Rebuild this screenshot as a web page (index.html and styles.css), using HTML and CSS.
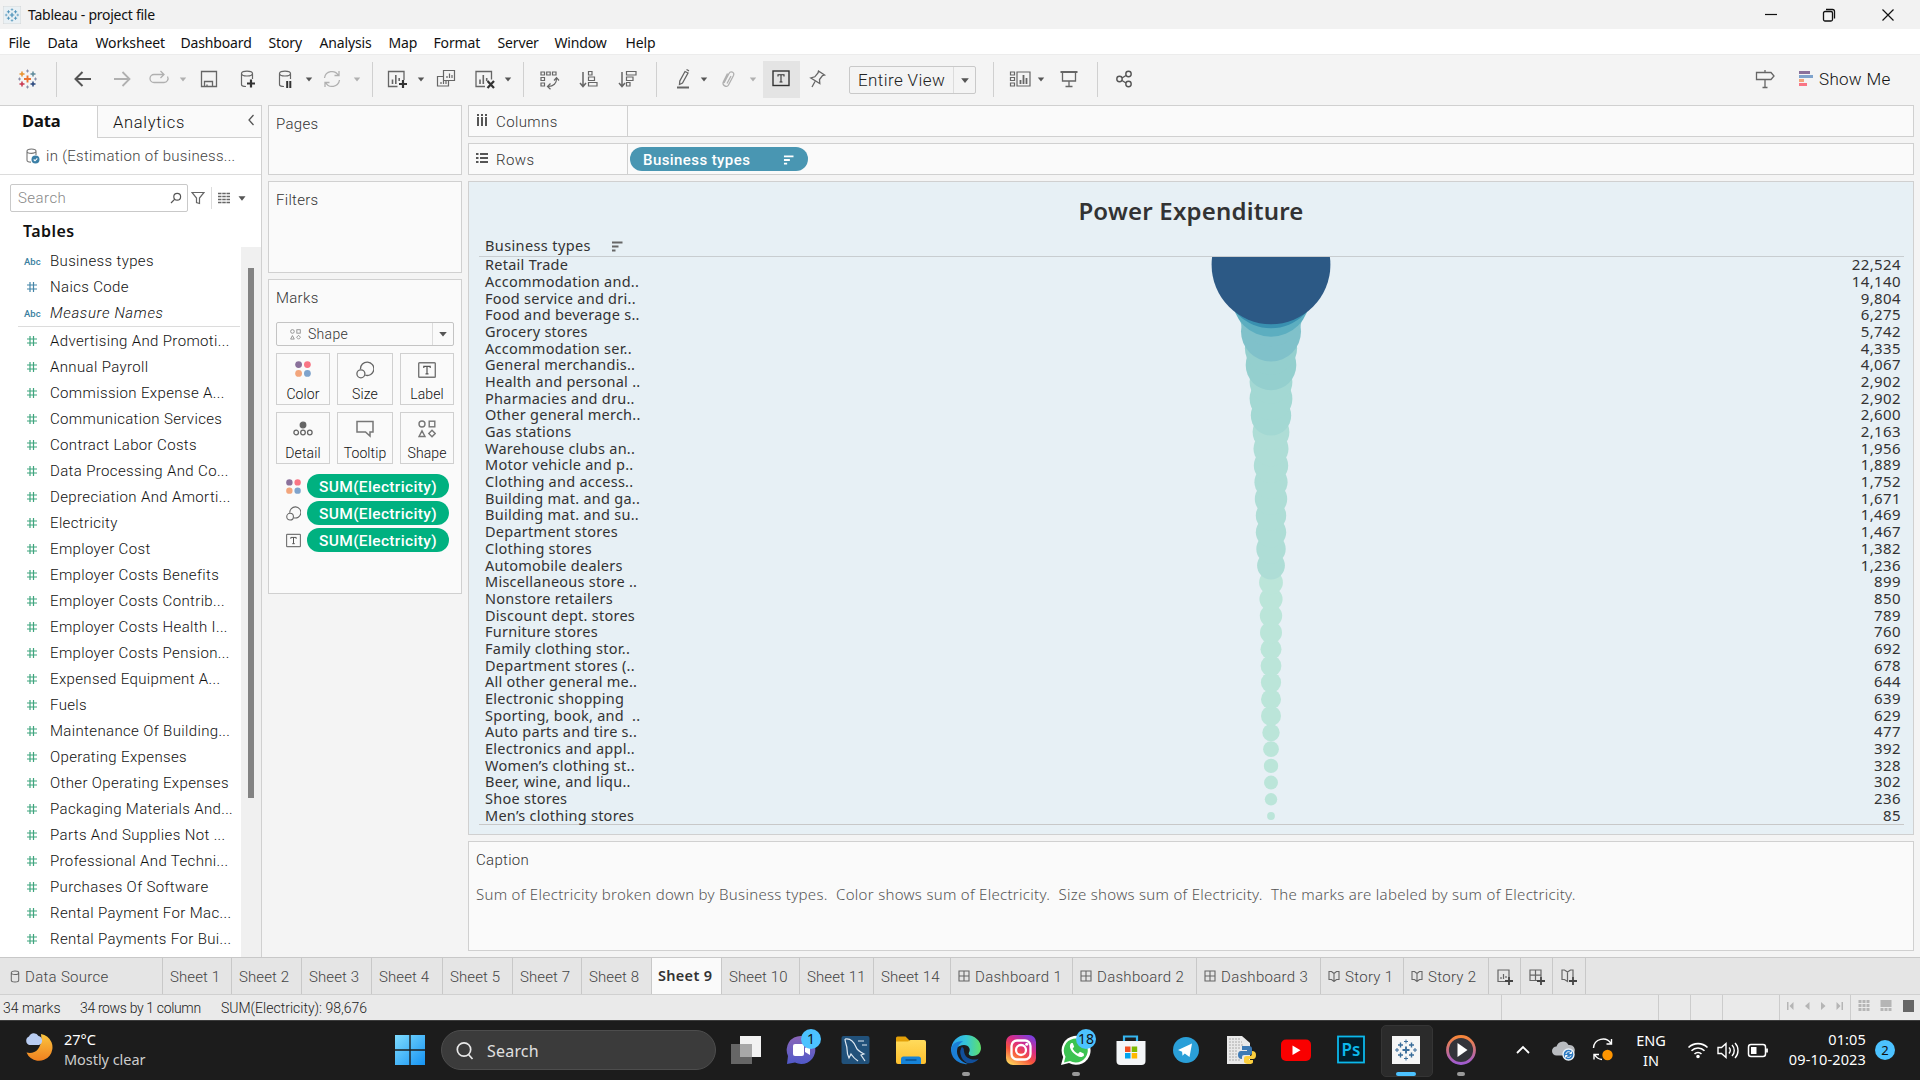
FILE: index.html
```html
<!DOCTYPE html>
<html lang="en">
<head>
<meta charset="utf-8">
<title>Tableau - project file</title>
<link rel="stylesheet" href="styles.css">
</head>
<body>
<svg class="defs" aria-hidden="true">
  <defs>
    <symbol id="caret" viewBox="0 0 10 28"><path d="M1.8 12.5h6.4L5 16.5z" fill="currentColor"/></symbol>
    <symbol id="hash" viewBox="0 0 12 12"><path d="M4 1v10M7.500 1v10M1 4h10M1 8h10" stroke="currentColor" stroke-width="1.2" fill="none"/></symbol>
    <symbol id="dots" viewBox="0 0 16 16"><circle cx="3.600" cy="3.600" r="3.400" fill="#8a719b"/><circle cx="12.400" cy="3.600" r="3.400" fill="#f97585"/><circle cx="3.600" cy="12.400" r="3.400" fill="#f2a57c"/><circle cx="12.400" cy="12.400" r="3.400" fill="#7fa3cc"/></symbol>
    <symbol id="size" viewBox="0 0 18 18"><g fill="none" stroke="#666" stroke-width="1.300"><path d="M4.500 8.200A6.700 6.700 0 1 1 9.300 14.200"/><circle cx="4.900" cy="12.800" r="4"/></g></symbol>
    <symbol id="label" viewBox="0 0 18 16"><rect x=".7" y=".7" width="16.600" height="14.600" rx=".8" fill="none" stroke="#777" stroke-width="1.400"/><path d="M5.800 6V4.300h6.400V6M9 4.300v7.500M7.500 11.800h3" fill="none" stroke="#555" stroke-width="1.200"/></symbol>
    <symbol id="shapes" viewBox="0 0 18 18"><g fill="none" stroke="currentColor" stroke-width="1.400"><circle cx="4" cy="4" r="3"/><rect x="11.200" y="1.200" width="5.600" height="5.600"/><path d="M4 10.800L7 16.500H1zM14 10.300l3.200 3.200L14 16.700l-3.200-3.200z"/></g></symbol>
    <symbol id="sort" viewBox="0 0 12 11"><path d="M1 1.500h10.500M1 5.500h6.500M1 9.500h3.500" stroke="currentColor" stroke-width="2" fill="none"/></symbol>
    <symbol id="dash" viewBox="0 0 12 12"><path d="M1 1h10v10H1zM6 1v10M1 6h10" fill="none" stroke="#666" stroke-width="1.100"/></symbol>
    <symbol id="story" viewBox="0 0 12 12"><path d="M1 1.500h2.500L6 3.500l2.500-2H11v8H8.500L6 11.500l-2.500-2H1zM6 3.500v8" fill="none" stroke="#666" stroke-width="1.100"/></symbol>
    <symbol id="plus" viewBox="0 0 8 8"><path d="M4 0v8M0 4h8" stroke="#444" stroke-width="1.800"/></symbol>
    <symbol id="marks-t" viewBox="0 0 28 28"><path d="M14 10.500v7M10.500 14h7" stroke-width="1.900"/><path d="M8.500 6.500v5M6 9h5M19.500 6.500v5M17 9h5M8.500 16.500v5M6 19h5M19.500 16.500v5M17 19h5" stroke-width="1.400"/><path d="M14 3.500v4M12 5.500h4M14 20.500v4M12 22.500h4M5 12v4M3 14h4M23 12v4M21 14h4" stroke-width="1"/></symbol>
    <linearGradient id="gWin" x1="0" y1="0" x2="1" y2="1"><stop offset="0" stop-color="#7fdcff"/><stop offset="1" stop-color="#1593f2"/></linearGradient>
    <linearGradient id="gMoon" x1="0" y1="0" x2="0" y2="1"><stop offset="0" stop-color="#fbc640"/><stop offset="1" stop-color="#f0801f"/></linearGradient>
    <linearGradient id="gInsta" x1=".2" y1="1" x2=".8" y2="0"><stop offset="0" stop-color="#ffd35a"/><stop offset=".35" stop-color="#f7553d"/><stop offset=".65" stop-color="#d92c86"/><stop offset="1" stop-color="#7a3fe0"/></linearGradient>
    <linearGradient id="gTeams" x1="0" y1="0" x2="0" y2="1"><stop offset="0" stop-color="#8b66b8"/><stop offset="1" stop-color="#5059c9"/></linearGradient>
    <linearGradient id="gEdge" x1="0" y1="0" x2="1" y2="0"><stop offset="0" stop-color="#2ba6f0"/><stop offset=".5" stop-color="#35c6d8"/><stop offset="1" stop-color="#5fe06a"/></linearGradient>
    <linearGradient id="gFolder" x1="0" y1="0" x2="0" y2="1"><stop offset="0" stop-color="#ffdb5c"/><stop offset="1" stop-color="#fdbf2d"/></linearGradient>
    <linearGradient id="gMedia" x1="0" y1="0" x2="0" y2="1"><stop offset="0" stop-color="#f6863a"/><stop offset="1" stop-color="#a05bd0"/></linearGradient>
  </defs>
</svg>

<header class="titlebar">
  <svg class="appicon" viewBox="0 0 28 28" stroke="#4a90b8"><rect width="28" height="28" fill="#e9f0f4" stroke="#c9c9c9"/><use href="#marks-t"/></svg>
  <span class="apptitle">Tableau - project file</span>
  <svg class="winbtn" viewBox="0 0 14 14"><path d="M1 6.500h12" stroke="#111" stroke-width="1.200"/></svg>
  <svg class="winbtn" viewBox="0 0 14 14" fill="none" stroke="#111" stroke-width="1.300"><rect x="1.500" y="3.500" width="9" height="9.500" rx="1.500"/><path d="M4 1.500h6.500a2 2 0 0 1 2 2v7"/></svg>
  <svg class="winbtn" viewBox="0 0 14 14"><path d="M1.500 1.500l11 11M12.500 1.500l-11 11" stroke="#111" stroke-width="1.200"/></svg>
</header>

<nav class="menubar"><span>File</span><span>Data</span><span>Worksheet</span><span>Dashboard</span><span>Story</span><span>Analysis</span><span>Map</span><span>Format</span><span>Server</span><span>Window</span><span>Help</span></nav>

<div class="toolbar">
  <svg class="ic" viewBox="0 0 28 28" fill="none"><path d="M14.500 10.500v7M11 14h7" stroke="#eb7330" stroke-width="1.900"/><path d="M9 6.500v5M6.500 9h5" stroke="#e8912d" stroke-width="1.500"/><path d="M20 6.500v5M17.500 9h5" stroke="#5d8a9b" stroke-width="1.500"/><path d="M9 16.500v5M6.500 19h5" stroke="#c8344e" stroke-width="1.500"/><path d="M20 16.500v5M17.500 19h5" stroke="#27457c" stroke-width="1.500"/><path d="M14.500 4.500v3M13 6h3M14.500 20.500v3M13 22h3M6.500 12.500v3M5 14h3M22.500 12.500v3M21 14h3" stroke="#8a8fa8"/></svg>
  <i class="sep"></i>
  <svg class="ic" viewBox="0 0 28 28" fill="none" stroke="#555" stroke-width="2"><path d="M22 14H7M13.500 7L6.500 14l7 7"/></svg>
  <svg class="ic" viewBox="0 0 28 28" fill="none" stroke="#b0b0b0" stroke-width="1.800"><path d="M6 14h15M14.500 7l7 7-7 7"/></svg>
  <svg class="ic" viewBox="0 0 28 28" fill="none" stroke="#b0b0b0" stroke-width="1.300"><path d="M18.500 9.500H9a4 4 0 0 0 0 8h10a4 4 0 0 0 3.500-6M15.500 6l3.500 3.500-3.500 3.500"/></svg>
  <svg class="caret off"><use href="#caret"/></svg>
  <svg class="ic" viewBox="0 0 28 28" fill="none" stroke="#666" stroke-width="1.300"><path d="M6.500 6.500h15v15h-15zM9.500 21.500v-5h8v5M12 21.500v-2"/></svg>
  <svg class="ic" viewBox="0 0 28 28" fill="none" stroke="#666" stroke-width="1.200"><path d="M8.500 8.500c0-3.300 11-3.300 11 0s-11 3.300-11 0v11c0 1.500 2 2 4.500 2M19.500 8.500V14"/><path d="M18 14.500v8M14 18.500h8" stroke="#333" stroke-width="2.200"/></svg>
  <svg class="ic" viewBox="0 0 28 28" fill="none" stroke="#666" stroke-width="1.200"><path d="M8.500 8.500c0-3.300 11-3.300 11 0s-11 3.300-11 0v11c0 1.500 2 2 4.500 2M19.500 8.500V14"/><path d="M16.200 16v7M19.300 16v7" stroke="#333" stroke-width="2"/></svg>
  <svg class="caret"><use href="#caret"/></svg>
  <svg class="ic" viewBox="0 0 28 28" fill="none" stroke="#b0b0b0" stroke-width="1.300"><path d="M6.500 13A7.500 7.500 0 0 1 20.500 10.500M21.500 15A7.500 7.500 0 0 1 7.500 17.500M21 6v4.500h-4.500M7 22v-4.500h4.500"/></svg>
  <svg class="caret off"><use href="#caret"/></svg>
  <i class="sep"></i>
  <svg class="ic" viewBox="0 0 28 28" fill="none" stroke="#666" stroke-width="1.300"><path d="M14.500 21.500h-9v-15h15.500V15"/><path d="M9.500 14.500V19M12.800 10v9M16.200 13v3" stroke-width="1.600"/><path d="M20 15v8M16 19h8" stroke="#333" stroke-width="2.200"/></svg>
  <svg class="caret"><use href="#caret"/></svg>
  <svg class="ic" viewBox="0 0 28 28" fill="none" stroke="#666" stroke-width="1.200"><path d="M11.500 5.500h11v10h-11zM11.500 11.500h-6v9.500h11v-5.500M15 13v-2M17.500 13V8.500M20 13v-3M9 19v-2M11.500 19v-4M14 19v-3"/></svg>
  <svg class="ic" viewBox="0 0 28 28" fill="none" stroke="#666" stroke-width="1.300"><path d="M15 21.500H6v-15h15.500v8"/><path d="M10 14.500V19M13.300 10v9M16.700 13v3" stroke-width="1.600"/><path d="M17.500 16l6.500 7M24 16l-6.500 7" stroke="#333" stroke-width="2.200"/></svg>
  <svg class="caret"><use href="#caret"/></svg>
  <i class="sep"></i>
  <svg class="ic" viewBox="0 0 28 28" fill="none" stroke="#666" stroke-width="1.200"><path d="M6 7h3.500v3H6zM11.700 7h3.500v3h-3.500zM17.500 7H21v3h-3.500zM6 12.500h3.500v3H6zM6 18h3.500v3H6zM21.500 14c0 4-3 7.500-8 7.500M19 15.500l2.500-2.800 2.500 2.800M15.500 18.500l-3 3 3 2.800"/></svg>
  <svg class="ic" viewBox="0 0 28 28" fill="none" stroke="#666" stroke-width="1.200"><path d="M8 7v14M5 18l3 3.500 3-3.500" stroke-width="1.500"/><path d="M13.500 6.500H17v3.500h-3.500zM13.500 12h6v3.500h-6zM13.500 17.500H22V21h-8.500z"/></svg>
  <svg class="ic" viewBox="0 0 28 28" fill="none" stroke="#666" stroke-width="1.200"><path d="M8 7v14M5 18l3 3.500 3-3.500" stroke-width="1.500"/><path d="M12.500 6.500H22V10h-9.500zM12.500 12H19v3.500h-6.500zM12.500 17.500H16V21h-3.500z"/></svg>
  <i class="sep"></i>
  <svg class="ic" viewBox="0 0 28 28" fill="none" stroke="#666" stroke-width="1.300"><path d="M16 6.500l3 1.500-5.500 10-3 1.500.300-3.500zM17.500 4.500l2.500 1.300"/><path d="M8 22.500h12" stroke-width="2"/></svg>
  <svg class="caret"><use href="#caret"/></svg>
  <svg class="ic" viewBox="0 0 28 28" fill="none" stroke="#b0b0b0" stroke-width="1.300"><path d="M9 18l5-9.500c1.500-3 6-1.500 4.500 2l-5 9.500c-1.500 3-7 .500-5-3.500l4-8M16 11l-4 7.500"/></svg>
  <svg class="caret off"><use href="#caret"/></svg>
  <span class="labelbtn"><svg class="ic" viewBox="0 0 28 28" fill="none" stroke="#333" stroke-width="1.400"><rect x="5" y="6" width="16" height="14.500"/><path d="M10 11.500V9.700h6v1.800M13 9.700v7.300M11.500 17h3" stroke-width="1.100"/></svg></span>
  <svg class="ic" viewBox="0 0 28 28" fill="none" stroke="#666" stroke-width="1.300"><path d="M15.500 6l6 4-2 .5-3 4 .3 4-9-5.500 4-1.200 3.200-3.800zM12 16.500L9 22"/></svg>
  <span class="fit"><b>Entire View</b><svg class="caret"><use href="#caret"/></svg></span>
  <i class="sep"></i>
  <svg class="ic" viewBox="0 0 28 28" fill="none" stroke="#666" stroke-width="1.200"><path d="M4.500 7h4v3h-4zM4.500 12.500h4v3h-4zM4.500 18h4v3h-4zM11 7h13v14H11z"/><path d="M14.500 15v4M17.500 10v9M20.500 13v6" stroke-width="1.800"/></svg>
  <svg class="caret"><use href="#caret"/></svg>
  <svg class="ic" viewBox="0 0 28 28" fill="none" stroke="#666" stroke-width="1.300"><path d="M5.500 7h17" stroke-width="2"/><path d="M7.500 7.500V16h13V7.500M14 16v5.500M10.500 21.500h7"/></svg>
  <i class="sep"></i>
  <svg class="ic" viewBox="0 0 28 28" fill="none" stroke="#555" stroke-width="1.400"><circle cx="9.500" cy="14" r="2.700"/><circle cx="18.500" cy="9" r="2.700"/><circle cx="18.500" cy="19" r="2.700"/><path d="M12 13l4-2.500M12 15.500l4 2.500"/></svg>
  <svg class="ic" viewBox="0 0 28 28" fill="none" stroke="#666" stroke-width="1.300"><path d="M5.500 7.500H20l3 3.500-3 3.500H5.500zM14 5v2.500M14 14.500v8M11.500 22.500h5"/></svg>
  <svg class="showic" viewBox="0 0 18 28"><path d="M2 6h11v3H2z" fill="#8a719b"/><path d="M2 10h14v3H2z" fill="#7fa3cc"/><path d="M2 14h5v3H2z" fill="#f2a57c"/><path d="M2 18h8v3H2z" fill="#f97585"/></svg>
  <span class="showme">Show Me</span>
</div>

<main class="work">
  <aside class="data">
    <div class="tabs"><b>Data</b><span class="an">Analytics<svg viewBox="0 0 8 12" class="chev"><path d="M6.500 1L2 6l4.500 5" fill="none" stroke="#555" stroke-width="1.300"/></svg></span></div>
    <div class="source"><svg viewBox="0 0 14 16" fill="none" stroke="#777" stroke-width="1.100"><path d="M1 3.200C1 .3 10 .3 10 3.200S1 6 1 3.200v9c0 1.500 1.500 1.800 4 1.900M10 3.200V7"/><circle cx="9.500" cy="11.500" r="4" fill="#3b7fa6" stroke="none"/><path d="M7.700 11.500l1.300 1.300 2.300-2.500" stroke="#fff"/></svg><span>in (Estimation of business...</span></div>
    <div class="find">
      <div class="box"><span>Search</span><svg viewBox="0 0 12 12" fill="none" stroke="#555" stroke-width="1.200"><circle cx="7.200" cy="4.800" r="3.400"/><path d="M4.800 7.200L1 11"/></svg></div>
      <svg class="funnel" viewBox="0 0 14 14" fill="none" stroke="#666" stroke-width="1.200"><path d="M1 1.500h12L8.500 7v5.500l-3-1V7z"/></svg>
      <i></i>
      <svg class="gridic" viewBox="0 0 12 12"><path d="M0 1.500h12M0 4.500h12M0 7.500h12M0 10.500h12" stroke="#666" stroke-width="1.500" stroke-dasharray="3.500 .75"/></svg>
      <svg class="caret"><use href="#caret"/></svg>
    </div>
    <h2>Tables</h2>
    <div class="fields">
      <div class="list">
        <div class="f dim"><small>Abc</small><span>Business types</span></div>
        <div class="f dim"><svg><use href="#hash"/></svg><span>Naics Code</span></div>
        <div class="f dim last"><small>Abc</small><em>Measure Names</em></div>
        <div class="f"><svg><use href="#hash"/></svg><span>Advertising And Promoti...</span></div>
        <div class="f"><svg><use href="#hash"/></svg><span>Annual Payroll</span></div>
        <div class="f"><svg><use href="#hash"/></svg><span>Commission Expense A...</span></div>
        <div class="f"><svg><use href="#hash"/></svg><span>Communication Services</span></div>
        <div class="f"><svg><use href="#hash"/></svg><span>Contract Labor Costs</span></div>
        <div class="f"><svg><use href="#hash"/></svg><span>Data Processing And Co...</span></div>
        <div class="f"><svg><use href="#hash"/></svg><span>Depreciation And Amorti...</span></div>
        <div class="f"><svg><use href="#hash"/></svg><span>Electricity</span></div>
        <div class="f"><svg><use href="#hash"/></svg><span>Employer Cost</span></div>
        <div class="f"><svg><use href="#hash"/></svg><span>Employer Costs Benefits</span></div>
        <div class="f"><svg><use href="#hash"/></svg><span>Employer Costs Contrib...</span></div>
        <div class="f"><svg><use href="#hash"/></svg><span>Employer Costs Health I...</span></div>
        <div class="f"><svg><use href="#hash"/></svg><span>Employer Costs Pension...</span></div>
        <div class="f"><svg><use href="#hash"/></svg><span>Expensed Equipment A...</span></div>
        <div class="f"><svg><use href="#hash"/></svg><span>Fuels</span></div>
        <div class="f"><svg><use href="#hash"/></svg><span>Maintenance Of Building...</span></div>
        <div class="f"><svg><use href="#hash"/></svg><span>Operating Expenses</span></div>
        <div class="f"><svg><use href="#hash"/></svg><span>Other Operating Expenses</span></div>
        <div class="f"><svg><use href="#hash"/></svg><span>Packaging Materials And...</span></div>
        <div class="f"><svg><use href="#hash"/></svg><span>Parts And Supplies Not ...</span></div>
        <div class="f"><svg><use href="#hash"/></svg><span>Professional And Techni...</span></div>
        <div class="f"><svg><use href="#hash"/></svg><span>Purchases Of Software</span></div>
        <div class="f"><svg><use href="#hash"/></svg><span>Rental Payment For Mac...</span></div>
        <div class="f"><svg><use href="#hash"/></svg><span>Rental Payments For Bui...</span></div>
      </div>
      <div class="track"><div class="thumb"></div></div>
    </div>
  </aside>

  <section class="shelves">
    <div class="card pages">Pages</div>
    <div class="card filters">Filters</div>
    <div class="card marks">
      <span>Marks</span>
      <div class="mtype"><svg class="sh"><use href="#shapes"/></svg><span>Shape</span><svg class="caret" viewBox="0 0 21 22"><path d="M6.500 9h8l-4 4.500z" fill="currentColor"/></svg></div>
      <div class="mgrid">
        <div><svg class="dotic"><use href="#dots"/></svg>Color</div>
        <div><svg><use href="#size"/></svg>Size</div>
        <div><svg><use href="#label"/></svg>Label</div>
        <div><svg viewBox="0 0 20 18" fill="none" stroke="#666" stroke-width="1.300"><circle cx="10" cy="5" r="2.800" fill="#666"/><circle cx="3.200" cy="12.500" r="2.300"/><circle cx="10" cy="12.500" r="2.300"/><circle cx="16.800" cy="12.500" r="2.300"/></svg>Detail</div>
        <div><svg viewBox="0 0 18 18" fill="none" stroke="#777" stroke-width="1.500"><path d="M1 1.500h16V12h-3v4L9.500 12H1z"/></svg>Tooltip</div>
        <div><svg class="dk"><use href="#shapes"/></svg>Shape</div>
      </div>
      <div class="pillrow"><svg><use href="#dots"/></svg><span class="pill green">SUM(Electricity)</span></div>
      <div class="pillrow"><svg><use href="#size"/></svg><span class="pill green">SUM(Electricity)</span></div>
      <div class="pillrow"><svg><use href="#label"/></svg><span class="pill green">SUM(Electricity)</span></div>
    </div>
  </section>

  <section class="canvas">
    <div class="card shelf"><div class="slabel"><svg viewBox="0 0 12 14" stroke="#555" stroke-width="2"><path d="M2 1v2M6 1v2M10 1v2M2 4v9M6 4v9M10 4v9"/></svg><span>Columns</span></div></div>
    <div class="card shelf"><div class="slabel"><svg viewBox="0 0 12 14" stroke="#555" stroke-width="2"><path d="M0 3h2.500M4 3h8M0 7h2.500M4 7h8M0 11h2.500M4 11h8"/></svg><span>Rows</span></div><span class="pill blue">Business types<svg><use href="#sort"/></svg></span></div>
    <div class="card view">
      <h1>Power Expenditure</h1>
      <div class="vhead">Business types<svg><use href="#sort"/></svg></div>
      <div class="plot">
        <div class="r"><span>Retail Trade</span><span>22,524</span></div>
        <div class="r"><span>Accommodation and..</span><span>14,140</span></div>
        <div class="r"><span>Food service and dri..</span><span>9,804</span></div>
        <div class="r"><span>Food and beverage s..</span><span>6,275</span></div>
        <div class="r"><span>Grocery stores</span><span>5,742</span></div>
        <div class="r"><span>Accommodation ser..</span><span>4,335</span></div>
        <div class="r"><span>General merchandis..</span><span>4,067</span></div>
        <div class="r"><span>Health and personal ..</span><span>2,902</span></div>
        <div class="r"><span>Pharmacies and dru..</span><span>2,902</span></div>
        <div class="r"><span>Other general merch..</span><span>2,600</span></div>
        <div class="r"><span>Gas stations</span><span>2,163</span></div>
        <div class="r"><span>Warehouse clubs an..</span><span>1,956</span></div>
        <div class="r"><span>Motor vehicle and p..</span><span>1,889</span></div>
        <div class="r"><span>Clothing and access..</span><span>1,752</span></div>
        <div class="r"><span>Building mat. and ga..</span><span>1,671</span></div>
        <div class="r"><span>Building mat. and su..</span><span>1,469</span></div>
        <div class="r"><span>Department stores</span><span>1,467</span></div>
        <div class="r"><span>Clothing stores</span><span>1,382</span></div>
        <div class="r"><span>Automobile dealers</span><span>1,236</span></div>
        <div class="r"><span>Miscellaneous store ..</span><span>899</span></div>
        <div class="r"><span>Nonstore retailers</span><span>850</span></div>
        <div class="r"><span>Discount dept. stores</span><span>789</span></div>
        <div class="r"><span>Furniture stores</span><span>760</span></div>
        <div class="r"><span>Family clothing stor..</span><span>692</span></div>
        <div class="r"><span>Department stores (..</span><span>678</span></div>
        <div class="r"><span>All other general me..</span><span>644</span></div>
        <div class="r"><span>Electronic shopping</span><span>639</span></div>
        <div class="r"><span>Sporting, book, and&nbsp; ..</span><span>629</span></div>
        <div class="r"><span>Auto parts and tire s..</span><span>477</span></div>
        <div class="r"><span>Electronics and appl..</span><span>392</span></div>
        <div class="r"><span>Women’s clothing st..</span><span>328</span></div>
        <div class="r"><span>Beer, wine, and liqu..</span><span>302</span></div>
        <div class="r"><span>Shoe stores</span><span>236</span></div>
        <div class="r"><span>Men’s clothing stores</span><span>85</span></div>
        <svg class="bubbles" viewBox="0 0 120 567">
          <g fill="#bbe5d9"><circle cx="60" cy="559" r="3.900"/><circle cx="60" cy="542.300" r="6.200"/><circle cx="60" cy="525.600" r="7"/><circle cx="60" cy="508.900" r="7.200"/><circle cx="60" cy="492.200" r="7.900"/><circle cx="60" cy="475.600" r="8.700"/><circle cx="60" cy="458.900" r="10"/><circle cx="60" cy="442.200" r="10"/><circle cx="60" cy="425.500" r="10.100"/><circle cx="60" cy="408.900" r="10.400"/><circle cx="60" cy="392.200" r="10.500"/><circle cx="60" cy="375.500" r="11"/><circle cx="60" cy="358.800" r="11.200"/><circle cx="60" cy="342.100" r="11.600"/><circle cx="60" cy="325.500" r="11.900"/></g>
          <g fill="#aeddd6"><circle cx="60" cy="308.600" r="13.900"/><circle cx="60" cy="291.900" r="14.700"/><circle cx="60" cy="275.200" r="15.200"/><circle cx="60" cy="258.500" r="15.200"/><circle cx="60" cy="241.900" r="16.200"/><circle cx="60" cy="225.200" r="16.600"/><circle cx="60" cy="208.500" r="17.200"/><circle cx="60" cy="191.800" r="17.500"/><circle cx="60" cy="175.100" r="18.400"/></g>
          <g fill="#a3d8d3"><circle cx="60" cy="158.400" r="20.200"/><circle cx="60" cy="141.800" r="21.400"/><circle cx="60" cy="125.100" r="21.400"/></g>
          <g fill="#94cfce"><circle cx="60" cy="108" r="25.300"/><circle cx="60" cy="91.300" r="26.100"/></g>
          <g fill="#80c1ca"><circle cx="60" cy="74.500" r="30"/><circle cx="60" cy="58" r="31.400"/></g>
          <circle cx="60" cy="41.200" r="38.500" fill="#5caec0"/><circle cx="60" cy="24.500" r="46.800" fill="#3990b0"/><circle cx="60" cy="7.800" r="59.400" fill="#2c5985"/>
        </svg>
      </div>
    </div>
    <div class="card caption"><span>Caption</span><p>Sum of Electricity broken down by Business types.&nbsp; Color shows sum of Electricity.&nbsp; Size shows sum of Electricity.&nbsp; The marks are labeled by sum of Electricity.</p></div>
  </section>
</main>

<div class="sheets">
  <span class="ds"><svg viewBox="0 0 10 14" fill="none" stroke="#666" stroke-width="1.100"><path d="M1 3c0-2.600 8-2.600 8 0S1 5.600 1 3v8c0 2.500 8 2.500 8 0V3"/></svg>Data Source</span><span>Sheet 1</span><span>Sheet 2</span><span>Sheet 3</span><span>Sheet 4</span><span>Sheet 5</span><span>Sheet 7</span><span>Sheet 8</span><span class="on">Sheet 9</span><span>Sheet 10</span><span>Sheet 11</span><span>Sheet 14</span><span><svg><use href="#dash"/></svg>Dashboard 1</span><span><svg><use href="#dash"/></svg>Dashboard 2</span><span><svg><use href="#dash"/></svg>Dashboard 3</span><span><svg><use href="#story"/></svg>Story 1</span><span><svg><use href="#story"/></svg>Story 2</span>
  <span class="new"><svg viewBox="0 0 18 18"><path d="M9.500 13.500H2V2h11v7M5 11V9M7.500 11V6M10 10V8" fill="none" stroke="#666" stroke-width="1.200"/><use href="#plus" x="9" y="9" width="8" height="8"/></svg></span>
  <span class="new"><svg viewBox="0 0 18 18"><path d="M9.500 12.500H2V2h11v7M7.500 2v10.500M2 7.200h11" fill="none" stroke="#666" stroke-width="1.200"/><use href="#plus" x="9" y="9" width="8" height="8"/></svg></span>
  <span class="new"><svg viewBox="0 0 18 18"><path d="M13 9V2h-2.500l-3 2-3-2H2v9.500h2.500l3 2V4" fill="none" stroke="#666" stroke-width="1.200"/><use href="#plus" x="9" y="9" width="8" height="8"/></svg></span>
</div>

<div class="status">
  <span>34 marks</span><span class="rc">34 rows by 1 column</span><span>SUM(Electricity): 98,676</span>
  <i></i><i></i><i></i><i></i>
  <span class="nav"><svg viewBox="0 0 72 12" fill="#b5b5b5"><path d="M8 2v8h1.500V2zM14.500 2v8l-4-4zM30.500 2v8l-4.500-4zM42 2v8l4.500-4zM57.500 2v8l4-4zM62.500 2H64v8h-1.500z"/></svg></span>
  <span class="modes"><svg viewBox="0 0 70 12"><path d="M8.500 1.500h11M8.500 5.500h11M8.500 9.500h11" stroke="#b5b5b5" stroke-width="3" stroke-dasharray="3 1"/><path d="M30.500 0h11v7h-11z" fill="#b5b5b5"/><path d="M30.500 9.500h11" stroke="#b5b5b5" stroke-width="3" stroke-dasharray="3 1"/><path d="M53 0h11v12H53z" fill="#666"/></svg></span>
</div>

<footer class="taskbar">
  <div class="weather"><svg viewBox="0 0 32 32"><path d="M18 2a13.500 13.500 0 1 1-14.500 18.500C12 23 20 16 18 2z" fill="url(#gMoon)"/><path d="M6.500 13a4.500 4.500 0 0 1-.5-8.500A5.200 5.200 0 0 1 15.500 4 4.700 4.700 0 0 1 16 13z" fill="#b9cdf2"/></svg><div>27°C<br><span>Mostly clear</span></div></div>
  <svg class="start" viewBox="0 0 30 30" fill="url(#gWin)"><path d="M0 0h14.300v14.300H0zM15.700 0H30v14.300H15.700zM0 15.700h14.300V30H0zM15.700 15.700H30V30H15.700z"/></svg>
  <div class="tsearch"><svg viewBox="0 0 20 20" fill="none" stroke="#e8e8e8" stroke-width="1.700"><circle cx="9" cy="8.500" r="6.700"/><path d="M13.500 13.500L17.500 18"/></svg>Search</div>
  <div class="apps">
    <span><svg viewBox="0 0 36 36"><path d="M12 4h21v21H12z" fill="#f2f2f2"/><path d="M3 12h21v20H3z" fill="#666"/><path d="M12 12h12v13H12z" fill="#a8a8a8"/></svg></span>
    <span><svg viewBox="0 0 36 36"><path d="M18 4a14 14 0 1 1-6 26.500L4 32l1-8A14 14 0 0 1 18 4z" fill="url(#gTeams)"/><rect x="10" y="12" width="11" height="12" rx="2" fill="#fff"/><path d="M22 16l5-3v10l-5-3z" fill="#fff"/></svg><b class="badge">1</b></span>
    <span><svg viewBox="0 0 36 36"><rect x="3.500" y="4" width="28" height="28" rx="2" fill="#21517a"/><path d="M7 7c5-1 9 3 11 8 1 3 4 5 8 7l-3 1 4 6M7 7c0 4 2 6 2 10s1 7 2 9l2-4c2 3 4 5 7 7M20 9h6M24 13h5" fill="none" stroke="#dfe9f2" stroke-width="1.200"/></svg></span>
    <span><svg viewBox="0 0 36 36"><path d="M3 6q0-1.500 1.500-1.500h8l4 4H20v8H3z" fill="#e3a008"/><path d="M3 9.500h12l2.500-1.500H31q2 0 2 2V30q0 2-2 2H5q-2 0-2-2z" fill="url(#gFolder)"/><path d="M8 32v-5q0-2.500 2.500-2.500h15Q28 24.500 28 27v5z" fill="#1683d8"/><path d="M12.500 28h11" stroke="#0b5394" stroke-width="1.600"/></svg></span>
    <span class="run"><svg viewBox="0 0 36 36"><path d="M3 19C3 9 10 3 18 3c9 0 15 6 15 13 0 5-4 8-8 8-3 0-5-1.500-4-3.500 2-3 0-7.500-5-7.500-6 0-11 6-13 6z" fill="url(#gEdge)"/><path d="M3 19c0-7 6-10.500 12-9.500-4 2-6 6-6 10 0 6 5 11 11 12.500A15 15 0 0 1 3 19z" fill="#1b7fd6"/><path d="M14 15c-4 6 1 15 8 15 4 0 7-1.500 9-4-8 8-19 0-15-9z" fill="#0c4a93"/><path d="M14 15c-3 4-2 12 5 16 5 1 9-1 11.500-4-7 2-14-1-14.500-8z" fill="#114f9a"/></svg></span>
    <span><svg viewBox="0 0 36 36"><rect x="3" y="3" width="30" height="30" rx="7" fill="url(#gInsta)"/><g fill="none" stroke="#fff" stroke-width="2.300"><rect x="8.500" y="8.500" width="19" height="19" rx="5.500"/><circle cx="18" cy="18" r="5"/></g><circle cx="23.700" cy="12.300" r="1.500" fill="#fff"/></svg></span>
    <span class="run"><svg viewBox="0 0 36 36"><path d="M3 33l2.200-8A14.500 14.500 0 1 1 11 31z" fill="#fff"/><path d="M6 30.500l1.500-5.800A12 12 0 1 1 12 29z" fill="#3cc351"/><path d="M13.500 11c-3 2-1.500 6.500 2 10s8 5.500 10.500 2.500l-.3-2-3.700-1.700-2 2c-2.500-1-4.500-3.200-5.300-5.300l1.500-1.800-1.500-3.700z" fill="#fff"/></svg><b class="badge">18</b></span>
    <span><svg viewBox="0 0 36 36"><path d="M11 10V4.500h13V10" fill="none" stroke="#35b4ee" stroke-width="2.200"/><path d="M3.500 9h29v20q0 4-4 4h-21q-4 0-4-4z" fill="#f4f6f8"/><path d="M12 14.500h5.500V20H12z" fill="#f25022"/><path d="M18.700 14.500h5.500V20h-5.500z" fill="#7fba00"/><path d="M12 21h5.500v5.500H12z" fill="#00a4ef"/><path d="M18.700 21h5.500v5.500h-5.500z" fill="#ffb900"/></svg></span>
    <span><svg viewBox="0 0 36 36"><circle cx="18" cy="18" r="13" fill="#2a9fd8"/><path d="M10 18l14-6.500-2.500 13.500-4.700-3.500-2.300 2.300-.4-4z" fill="#fff"/></svg></span>
    <span><svg viewBox="0 0 36 36"><path d="M4 4h15l8 7v21H4z" fill="#e9e9e9"/><path d="M6 7h11M6 10h13M6 13h15M6 16h12M6 19h9M6 22h9M6 25h9M6 28h12" stroke="#aaa" stroke-dasharray="2 1"/><path d="M19 14h7q3 0 3 3v4q0 2-3 2h-5q-2 0-2 2v2q-4 0-4-4t3-4h6v-1h-5z" fill="#3d7ab5"/><path d="M29 19q4 0 4 4t-3 4h-4v1h4v2q0 2-4 2t-5-2v-4q0-2 2.500-2H27q2 0 2-2.500z" fill="#fccf3f"/></svg></span>
    <span><svg viewBox="0 0 36 36"><rect x="3" y="7.500" width="30" height="21.500" rx="5" fill="#f90000"/><path d="M14.500 13.500v9.500l8-4.700z" fill="#fff"/></svg></span>
    <span><svg viewBox="0 0 36 36"><rect x="5" y="4.500" width="26" height="26" fill="#001d2b" stroke="#0cb8ec" stroke-width="1.800"/><text x="18" y="23.500" text-anchor="middle" class="ps">Ps</text></svg></span>
    <span class="act"><svg viewBox="0 0 36 36"><rect x="4" y="4" width="28" height="28" fill="#f6f6f6"/><g transform="translate(4 4)" stroke="#3a6d9a"><use href="#marks-t" width="28" height="28"/></g></svg></span>
    <span class="run"><svg viewBox="0 0 36 36"><circle cx="18" cy="18" r="13.500" fill="#33343a" stroke="url(#gMedia)" stroke-width="2.800"/><path d="M14.500 11l10 7-10 7z" fill="#fff"/></svg></span>
  </div>
  <div class="tray">
    <svg viewBox="0 0 36 36" fill="none" stroke="#fff" stroke-width="1.800"><path d="M12 21l6-6 6 6"/></svg>
    <svg viewBox="0 0 36 36"><path d="M11.500 23.500a4.500 4.500 0 0 1 0-9 6.500 6.500 0 0 1 12-1.500 5.200 5.200 0 0 1 2 10.500z" fill="#b9bcc0"/><circle cx="23.500" cy="22.500" r="5.500" fill="#2e7cc4" stroke="#e9f1f8" stroke-width="1.400"/><path d="M21 22c.5-3 4.500-3 5-.5M26 23.500c-.500 2.500-4.500 2.500-5 .2M26.500 19.500v2h-2M20.500 25.500v-2h2" stroke="#fff" fill="none"/></svg>
    <svg viewBox="0 0 36 36"><path d="M8.500 16a9.500 9.500 0 0 1 17.500-4.500M26.500 7v5h-5M17 27.500a9.500 9.500 0 0 1-7.500-5M9 27.500v-5h5" fill="none" stroke="#fff" stroke-width="1.400"/><circle cx="22.500" cy="23" r="5.200" fill="#ff9500"/></svg>
    <div class="lang">ENG<br>IN</div>
    <svg class="s" viewBox="0 0 30 36" fill="none" stroke="#fff" stroke-width="1.600"><path d="M5.500 15.500a13.500 13.500 0 0 1 19 0M8.500 18.800a9 9 0 0 1 13 0M11.500 22a5 5 0 0 1 7 0"/><circle cx="15" cy="24.500" r="1" fill="#fff"/></svg>
    <svg class="s" viewBox="0 0 30 36" fill="none" stroke="#fff" stroke-width="1.400"><path d="M5 15.500h3.500l4.500-4v14l-4.500-4H5zM16 15.500c1.500 1.500 1.500 4 0 6M19 13c3 3 3 8 0 11M22 11c4 4 4 11 0 15"/></svg>
    <svg class="s" viewBox="0 0 30 36"><rect x="5.500" y="12.500" width="17" height="12" rx="2.500" fill="none" stroke="#fff" stroke-width="1.500"/><path d="M8 15h5.500v7H8z" fill="#fff"/><path d="M24 16.500v4" stroke="#fff" stroke-width="1.800"/></svg>
    <div class="clock">01:05<br>09-10-2023</div>
    <b class="note">2</b>
  </div>
</footer>
</body>
</html>
```
FILE: styles.css
```css
* { box-sizing: border-box; }
body { margin: 0; width: 1920px; height: 1080px; overflow: hidden; background: #f4f4f4; font-family: Roboto, "Noto Sans", sans-serif; font-weight: 300; font-size: 15px; color: #222; display: flex; flex-direction: column; }
svg { display: block; flex: none; }
.defs { position: absolute; width: 0; height: 0; }
.caret { width: 10px; height: 28px; color: #555; }
.caret.off { color: #b0b0b0; }

.titlebar { height: 29px; background: #f2f2f2; display: flex; align-items: center; padding-left: 3px; font: 400 14px "Noto Sans", sans-serif; letter-spacing: 0; color: #111; }
.appicon { width: 18px; height: 18px; margin-right: 7px; }
.apptitle { flex: 1; letter-spacing: -.25px; }
.winbtn { width: 14px; height: 14px; margin-right: 45px; }
.winbtn:nth-of-type(2) { margin-right: 44px; }
.winbtn:last-child { margin-right: 25px; }

.menubar { height: 25px; background: #fff; display: grid; grid-template-columns: 39px 48px 85px 88px 51px 69px 45px 64px 57px 71px 1fr; padding: 1px 0 0 8.500px; font: 400 14px/25px "Noto Sans", sans-serif; letter-spacing: -.15px; color: #111; }

.toolbar { height: 51px; border-top: 1px solid #ececec; display: grid; align-items: center; padding: 0 0 2px 13px; grid-template-columns: 43px 13px 39px 37px 33px 17px 38px 38px 33px 14px 34px 20px 11px 33px 16px 38px 33px 20px 12px 40px 39px 42px 13px 30px 16px 33px 15px 40px 46px 144px 13px 30px 19px 42px 13px 641px 46px 22px 1fr; }
.ic { width: 28px; height: 28px; }
.sep { width: 1px; height: 35px; background: #d0d0d0; }
.labelbtn { width: 37px; height: 37px; background: #e4e4e4; display: flex; align-items: center; justify-content: center; }
.fit { width: 127px; height: 28px; margin-top: 1px; border: 1px solid #c9c9c9; border-radius: 2px; display: flex; align-items: center; }
.fit b { font-weight: 300; font-size: 17px; width: 104px; padding-left: 8px; border-right: 1px solid #dcdcdc; line-height: 26px; letter-spacing: .4px; }
.fit .caret { margin-left: 6px; transform: scale(1.2); }
.showic { width: 18px; height: 28px; }
.showme { font-size: 17px; color: #111; letter-spacing: .3px; }

.work { height: 852px; display: flex; }
.card { background: #fafafa; border: 1px solid #d0d0d0; }

.data { width: 262px; background: #fff; border-top: 1px solid #d0d0d0; border-right: 1px solid #d0d0d0; margin-right: 6px; display: flex; flex-direction: column; color: #111; }
.tabs { display: flex; height: 32px; flex: none; }
.tabs b { width: 97px; padding-left: 22px; font: 700 16.500px/30px "Noto Sans", sans-serif; letter-spacing: -.1px; }
.an { flex: 1; background: #fafafa; border-left: 1px solid #d0d0d0; border-bottom: 1px solid #d0d0d0; padding: 1px 6px 0 15px; display: flex; align-items: center; justify-content: space-between; font-size: 16.500px; letter-spacing: .7px; }
.chev { width: 8px; height: 12px; margin-top: -4px; }
.source { height: 37px; flex: none; display: flex; align-items: center; border-bottom: 1px solid #dcdcdc; padding-left: 26px; color: #444; font-size: 15px; letter-spacing: .3px; }
.source svg { width: 14px; height: 16px; margin-right: 6px; }
.find { height: 46px; flex: none; display: flex; align-items: center; padding-left: 10px; }
.box { width: 178px; height: 28px; border: 1px solid #c9c9c9; border-radius: 2px; display: flex; align-items: center; justify-content: space-between; padding: 0 5px 0 7px; color: #888; font-size: 15px; letter-spacing: .45px; }
.box svg { width: 12px; height: 12px; }
.funnel { width: 14px; height: 14px; margin-left: 3px; }
.find i { width: 1px; height: 22px; background: #dcdcdc; margin: 0 6px; }
.gridic { width: 12px; height: 12px; margin-right: 8px; }
.find .caret { margin-left: -1px; transform: scale(1.1); }
h2 { margin: 0; padding-left: 23px; font: 600 16px/20px "Noto Sans", sans-serif; height: 26px; flex: none; letter-spacing: .45px; }
.fields { flex: 1; display: flex; min-height: 0; }
.list { width: 241px; padding-top: 1px; }
.track { flex: 1; background: #f0f0f0; padding: 21px 0 0 7px; }
.thumb { width: 6px; height: 530px; background: #838383; }
.f { height: 26px; display: flex; align-items: center; padding-left: 26px; letter-spacing: .36px; font-size: 15px; color: #111; }
.f svg { width: 12px; height: 12px; margin-right: 12px; color: #3fa57e; }
.f small { width: 26px; margin-left: -2px; font: 500 9.500px Roboto, sans-serif; color: #3a7f9f; letter-spacing: 0; }
.f.dim svg { color: #4586a8; }
.f.last { margin: 0 1px 1px 18px; padding-left: 8px; height: 27px; border-bottom: 1px solid #dcdcdc; }
.f em { letter-spacing: .65px; }

.shelves { width: 194px; margin-right: 6px; display: flex; flex-direction: column; gap: 6px; color: #333; letter-spacing: .3px; }
.pages, .filters { padding: 8px 7px; line-height: 20px; height: 70px; }
.filters { height: 92px; }
.marks { height: 315px; padding: 8px 7px; line-height: 20px; }
.mtype { margin-top: 14px; height: 24px; border: 1px solid #c4c4c4; border-radius: 2px; display: flex; align-items: center; font-size: 14px; padding-left: 13px; }
.mtype span { width: 131px; padding-left: 7px; }
.mtype .sh { width: 11px; height: 11px; color: #888; }
.mtype .caret { height: 22px; width: 21px; border-left: 1px solid #dcdcdc; }
.mgrid { margin: 7px 0 10px; display: grid; grid-template-columns: 54px 56px 54px; gap: 7px; }
.mgrid div { border: 1px solid #d0d0d0; height: 52px; display: flex; flex-direction: column; align-items: center; justify-content: space-between; padding: 7px 0 0; font-size: 14px; line-height: 20px; color: #111; letter-spacing: .1px; }
.mgrid svg { width: 18px; height: 18px; }
.mgrid .dotic { width: 16px; height: 16px; }
.mgrid div:nth-child(4) svg { width: 20px; }
.mgrid .dk { color: #777; }
.pillrow { height: 24px; margin-bottom: 3px; display: flex; align-items: center; padding-left: 10px; }
.pillrow svg { width: 15px; height: 15px; margin-right: 6px; }
.pill { height: 24px; border-radius: 12px; color: #fff; display: flex; align-items: center; }
.green { width: 142px; padding-top: 1px; background: #00b180; justify-content: center; font: 500 15.500px Roboto, sans-serif; letter-spacing: .35px; }
.blue { width: 178px; margin: 4px 0 0 2px; padding: 1px 14px 0 13px; background: #4996b2; justify-content: space-between; font: 500 15px Roboto, sans-serif; letter-spacing: .42px; }
.blue svg { width: 11px; height: 10px; }

.canvas { width: 1446px; display: flex; flex-direction: column; gap: 6px; color: #333; }
.shelf { height: 32px; display: flex; }
.slabel { width: 159px; border-right: 1px solid #d0d0d0; padding-left: 7px; display: flex; align-items: center; letter-spacing: .4px; }
.slabel span { padding-top: 2px; }
.shelf .blue { margin-top: 3px; }
.slabel svg { width: 12px; height: 14px; margin-right: 8px; margin-bottom: 2px; }
.view { height: 654px; background: #e7f0f5; padding: 0 9px; font-family: "Noto Sans", sans-serif; font-weight: 400; font-size: 14.500px; letter-spacing: .26px; }
h1 { margin: 0; height: 54px; text-align: center; font: 600 24px/58px "Noto Sans", sans-serif; letter-spacing: .2px; }
.vhead { height: 20px; line-height: 18px; padding: 0 0 2px 6px; display: flex; align-items: center; letter-spacing: .38px; }
.vhead svg { width: 12px; height: 11px; margin: 2px 0 0 20px; color: #666; }
.plot { position: relative; height: 569px; border-top: 1px solid #c8cdd0; border-bottom: 1px solid #c8c8c8; display: grid; grid-template-rows: repeat(34, 1fr); }
.view .plot, .view .vhead { margin-left: 1px; }
.r { display: flex; justify-content: space-between; align-items: center; line-height: 14px; min-height: 0; padding: 0 3px 2px 6px; }
.r span:last-child { font-size: 15px; letter-spacing: .4px; }
.bubbles { position: absolute; left: 731.500px; top: 0; width: 120px; height: 567px; overflow: hidden; }
.caption { height: 110px; padding: 8px 7px; }
.caption span { line-height: 20px; letter-spacing: .3px; }
.caption p { margin: 14px 0 0; font: 300 15px/20px "Noto Sans", sans-serif; color: #555; letter-spacing: .29px; }

.sheets { height: 38px; border-top: 1px solid #c8c8c8; border-bottom: 1px solid #d0d0d0; background: #e5e5e5; display: grid; grid-template-columns: 163px 69px 70px 70px 71px 70px 69px 70px 70px 78px 74px 77px 122px 124px 124px 83px 85px 32px 32px 33px; color: #444; font-size: 15px; letter-spacing: .1px; }
.sheets span { border-right: 1px solid #c8c8c8; display: flex; align-items: center; padding: 1px 0 0 7px; white-space: nowrap; }
.sheets svg { width: 12px; height: 12px; margin-right: 5px; margin-top: -1px; }
.sheets span:has(svg) { letter-spacing: .3px; }
.sheets .ds svg { width: 10px; height: 13px; margin-right: 5px; }
.sheets .ds { padding-left: 10px; }
.sheets .new svg { width: 18px; height: 18px; margin: 0; }
.sheets .on { background: #fafafa; padding: 0 0 2px 6px; font: 600 14.500px "Noto Sans", sans-serif; color: #333; letter-spacing: .3px; }

.status { height: 25px; background: #eaeaea; display: grid; grid-template-columns: 76px 141px 1280px 157px 32px 32px 57px 71px 1fr; font-size: 14px; align-items: center; padding: 0 0 0 3px; color: #222; letter-spacing: 0; }
.status .rc { letter-spacing: -.35px; padding-left: 1px; }
.status .rc + span { padding-left: 1px; }
.status i, .nav, .modes { border-left: 1px solid #ccc; height: 25px; position: relative; left: 1px; }
.status svg { width: 72px; height: 12px; margin-top: 5px; margin-left: -1px; }
.status .modes svg { width: 70px; }

.taskbar { height: 60px; background: #1c1c1c; border-top: 1px solid #3c3c3c; display: flex; align-items: center; padding-bottom: 1px; font: 400 14.500px/20px "Noto Sans", sans-serif; color: #fff; }
.weather { width: 395px; padding-left: 23px; display: flex; align-items: center; letter-spacing: -.05px; }
.weather > div { margin-top: -2px; }
.weather svg { width: 32px; height: 32px; margin-right: 9px; margin-top: -4px; }
.weather span { color: #ccc; }
.start { width: 30px; height: 30px; margin-right: 16px; }
.tsearch { width: 275px; height: 40px; border-radius: 20px; background: #3b3b3b; border: 1px solid #4d4d4d; display: flex; align-items: center; padding: 1px 0 0 13px; font-size: 16px; color: #e0e0e0; margin-right: 12px; letter-spacing: .2px; }
.tsearch svg { width: 20px; height: 20px; margin-right: 12px; }
.apps { display: flex; gap: 19px; width: 777px; }
.apps span { position: relative; width: 36px; height: 36px; }
.apps svg { width: 36px; height: 36px; position: relative; }
.run::after, .act::after { content: ""; position: absolute; left: 14px; top: 40px; width: 8px; height: 4px; border-radius: 2px; background: #999; }
.act::after { left: 8px; width: 20px; background: #4cc2ff; }
.act::before { content: ""; position: absolute; left: -7px; top: -7px; width: 50px; height: 50px; border-radius: 5px; background: #2b2b2b; border: 1px solid #353535; }
.badge { position: absolute; left: 18px; top: -3px; width: 20px; height: 20px; border-radius: 50%; background: #4cc2ff; color: #111; font: 400 14px/20px "Noto Sans", sans-serif; text-align: center; }
.ps { font: 600 17px "Noto Sans", sans-serif; fill: #0cb8ec; }
.tray { display: flex; align-items: center; }
.tray svg { width: 36px; height: 36px; margin-right: 4px; }
.tray svg.s { width: 30px; margin-right: 0; }
.lang { width: 52px; text-align: center; margin: 0 6px 0 0; }
.clock { width: 93px; text-align: right; letter-spacing: .15px; margin-top: -2px; }
.note { margin-left: 9px; width: 20px; height: 20px; border-radius: 50%; background: #4cc2ff; color: #111; font: 400 13px/20px "Noto Sans", sans-serif; text-align: center; }
```
